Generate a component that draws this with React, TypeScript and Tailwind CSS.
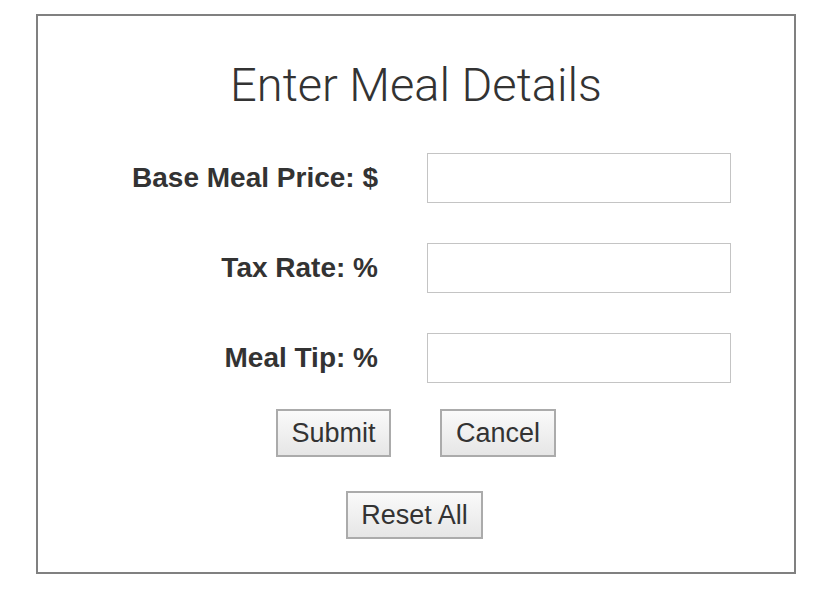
import React from "react";

const fields = ["Base Meal Price: $", "Tax Rate: %", "Meal Tip: %"];

const btn =
  "h-[48px] border-2 border-[#ababab] bg-gradient-to-b from-[#fafafa] to-[#e6e6e6] text-[27px] text-[#333] font-['Liberation_Sans',Arial,sans-serif] leading-none";

const App: React.FC = () => {
  return (
    <div className="w-[830px] h-[592px] bg-white pt-[14px] pl-[36px]">
      <div className="w-[760px] h-[560px] border-2 border-[#808080] flex flex-col items-center">
        {/* Title */}
        <h1 className="mt-[41px] text-[47px] leading-[56px] font-light text-[#333] font-['Roboto','Liberation_Sans',sans-serif]">
          Enter Meal Details
        </h1>

        {/* Fields */}
        <div className="mt-[40px] flex flex-col gap-[40px] w-full">
          {fields.map((label) => (
            <div key={label} className="flex items-center">
              <label className="w-[340px] text-right text-[28px] font-bold text-[#333] font-['Liberation_Sans',Arial,sans-serif]">
                {label}
              </label>
              <input
                type="text"
                className="ml-[49px] w-[304px] h-[50px] border border-[#c4c4c4] bg-white outline-none"
              />
            </div>
          ))}
        </div>

        {/* Buttons */}
        <div className="mt-[26px] flex gap-[49px]">
          <button className={`${btn} w-[115px]`}>Submit</button>
          <button className={`${btn} w-[116px]`}>Cancel</button>
        </div>
        <button className={`${btn} w-[137px] mt-[34px] mr-[3px]`}>Reset All</button>
      </div>
    </div>
  );
};

export default App;
